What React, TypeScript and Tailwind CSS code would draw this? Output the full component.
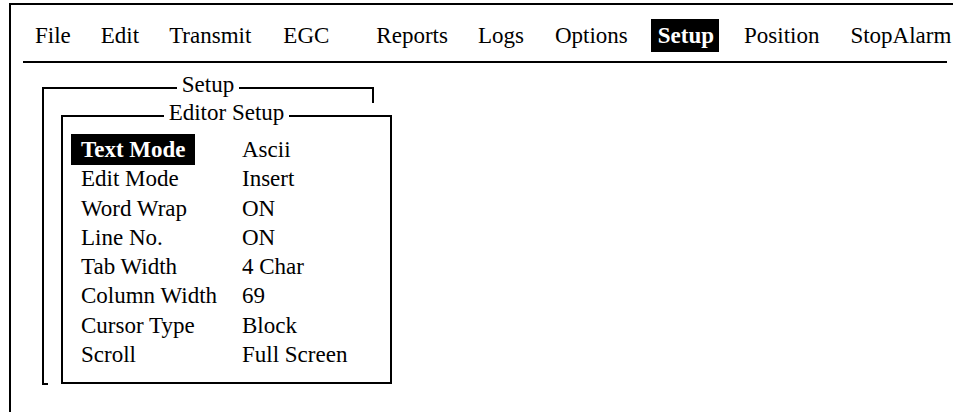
import React from "react";

const menu: { label: string; ml: string; active?: boolean }[] = [
  { label: "File", ml: "ml-0" },
  { label: "Edit", ml: "ml-[30px]" },
  { label: "Transmit", ml: "ml-[30px]" },
  { label: "EGC", ml: "ml-[32px]" },
  { label: "Reports", ml: "ml-[47px]" },
  { label: "Logs", ml: "ml-[30px]" },
  { label: "Options", ml: "ml-[31px]" },
  { label: "Setup", ml: "ml-[23px]", active: true },
  { label: "Position", ml: "ml-[25px]" },
  { label: "StopAlarm", ml: "ml-[31px]" },
];

const rows: [string, string][] = [
  ["Text Mode", "Ascii"],
  ["Edit Mode", "Insert"],
  ["Word Wrap", "ON"],
  ["Line No.", "ON"],
  ["Tab Width", "4 Char"],
  ["Column Width", "69"],
  ["Cursor Type", "Block"],
  ["Scroll", "Full Screen"],
];

export default function App() {
  return (
    <div className="w-[953px] h-[412px] bg-white overflow-hidden text-black text-[23px] font-[family-name:'Liberation_Serif','Times_New_Roman',serif]">
      <div className="ml-[9px] mt-[3px] h-[409px] border-t-2 border-l-2 border-black">
        {/* menu bar */}
        <div className="flex pl-[24px] mt-[14px] leading-[33px] whitespace-nowrap">
          {menu.map((m) =>
            m.active ? (
              <span key={m.label} className={`${m.ml} bg-black text-white font-bold pl-[7px] pr-[5px]`}>
                {m.label}
              </span>
            ) : (
              <span key={m.label} className={m.ml}>
                {m.label}
              </span>
            )
          )}
        </div>
        <div className="ml-[12px] mt-[9px] w-[924px] h-[2px] bg-black" />

        {/* Setup window */}
        <fieldset className="ml-[31px] mt-[10px] w-[332px] min-w-0 h-[312px] border-2 border-black">
          <legend className="mx-auto px-[5px] leading-[23px] pb-[7px]">Setup</legend>
          <div className="ml-[4px] w-[344px] h-[283px] bg-white pl-[13px]">
            <fieldset className="w-[331px] min-w-0 h-[281px] border-2 border-black bg-white">
              <legend className="mx-auto px-[5px] leading-[20px] pb-[6px]">Editor Setup</legend>
              <div className="pl-[18px] pt-[6px]">
                {rows.map(([k, v], i) => (
                  <div key={k} className="flex h-[29.3px] leading-[29.3px] whitespace-nowrap">
                    <div className="w-[161px]">
                      {i === 0 ? (
                        <span className="inline-block bg-black text-white font-bold -ml-[10px] pl-[10px] pr-[9px] py-[1px] -my-[1px] leading-[29.3px]">
                          {k}
                        </span>
                      ) : (
                        k
                      )}
                    </div>
                    <div>{v}</div>
                  </div>
                ))}
              </div>
            </fieldset>
          </div>
        </fieldset>
      </div>
    </div>
  );
}
